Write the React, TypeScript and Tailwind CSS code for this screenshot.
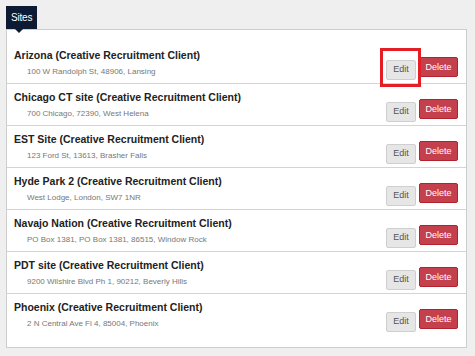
const sites = [
  { name: "Arizona (Creative Recruitment Client)", address: "100 W Randolph St, 48906, Lansing" },
  { name: "Chicago CT site (Creative Recruitment Client)", address: "700 Chicago, 72390, West Helena" },
  { name: "EST Site (Creative Recruitment Client)", address: "123 Ford St, 13613, Brasher Falls" },
  { name: "Hyde Park 2 (Creative Recruitment Client)", address: "West Lodge, London, SW7 1NR" },
  { name: "Navajo Nation (Creative Recruitment Client)", address: "PO Box 1381, PO Box 1381, 86515, Window Rock" },
  { name: "PDT site (Creative Recruitment Client)", address: "9200 Wilshire Blvd Ph 1, 90212, Beverly Hills" },
  { name: "Phoenix (Creative Recruitment Client)", address: "2 N Central Ave Fl 4, 85004, Phoenix" },
];

function SiteRow({ name, address, highlight, last }: { name: string; address: string; highlight?: boolean; last?: boolean }) {
  return (
    <div className={`flex h-[42px] items-start justify-between pl-[7px] pr-[8px] ${last ? "" : "border-b border-[#d4d4d4]"}`}>
      <div className="pt-[7px]">
        <div className="text-[10.5px] font-bold leading-[13px] text-[#222]">{name}</div>
        <div className="mt-[5px] pl-[13px] text-[8px] leading-[10px] text-[#777]">{address}</div>
      </div>
      <div className="mt-[13px] flex items-center gap-[3px]">
        <div className={highlight ? "relative" : ""}>
          <button className="h-[20px] w-[30px] rounded-[2px] border border-[#cfcfcf] bg-[#e6e6e6] text-[9px] text-[#555]">Edit</button>
          {highlight && (
            <span className="pointer-events-none absolute -top-[7px] -left-[6px] -right-[5px] -bottom-[7px] border-[3px] border-[#e31e24]" />
          )}
        </div>
        <button className="h-[20px] w-[39px] rounded-[2px] border border-[#b3212c] bg-[#c4404d] text-[9px] text-white">Delete</button>
      </div>
    </div>
  );
}

export default function App() {
  return (
    <div className="h-[356px] w-[475px] bg-[#efeff0] px-[6px] pt-[6px]" style={{ fontFamily: '"Liberation Sans", Arial, sans-serif' }}>
      <div className="relative w-fit h-[23px] bg-[#0c1a33] px-[5px] text-[10px] leading-[23px] tracking-[-0.2px] text-white">
        Sites
        <span className="absolute left-[9px] top-[23px] h-0 w-0 border-x-[4px] border-t-[4px] border-x-transparent border-t-[#0c1a33]" />
      </div>
      <div className="w-[461px] border border-[#cdcdcd] bg-white pt-[12px] pb-[11px]">
        {sites.map((s, i) => (
          <SiteRow key={s.name} name={s.name} address={s.address} highlight={i === 0} last={i === sites.length - 1} />
        ))}
      </div>
    </div>
  );
}
